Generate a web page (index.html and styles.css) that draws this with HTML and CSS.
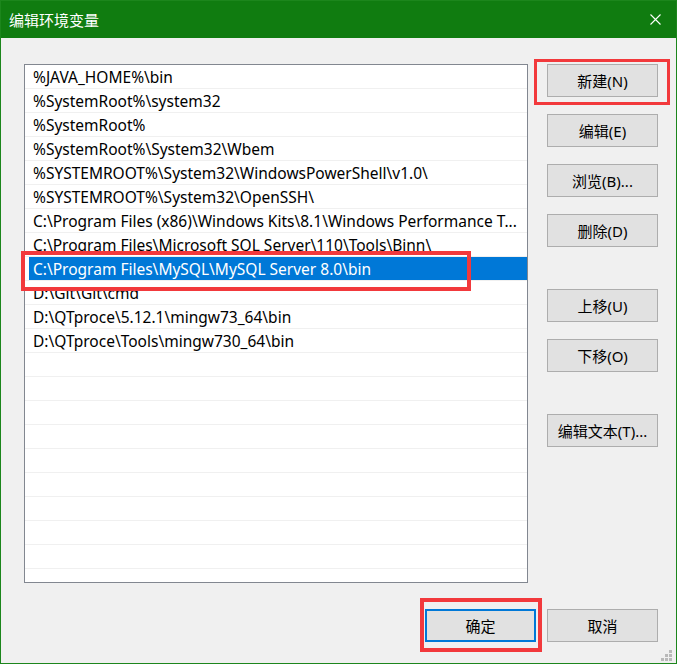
FILE: index.html
```html
<!DOCTYPE html>
<html lang="zh-CN">
<head>
<meta charset="utf-8">
<title>编辑环境变量</title>
<link rel="stylesheet" href="styles.css">
</head>
<body>
<div class="window">
  <div class="titlebar">
    <span class="title">编辑环境变量</span>
    <svg class="close" width="11" height="11" viewBox="0 0 11 11"><path d="M0.5 0.5 L10.5 10.5 M10.5 0.5 L0.5 10.5" stroke="#fff" stroke-width="1.1" fill="none"/></svg>
  </div>
  <div class="content">
    <div class="main">
      <div class="list">
        <div class="row"><span class="cell">%JAVA_HOME%\bin</span></div>
        <div class="row"><span class="cell">%SystemRoot%\system32</span></div>
        <div class="row"><span class="cell">%SystemRoot%</span></div>
        <div class="row"><span class="cell">%SystemRoot%\System32\Wbem</span></div>
        <div class="row"><span class="cell">%SYSTEMROOT%\System32\WindowsPowerShell\v1.0\</span></div>
        <div class="row"><span class="cell">%SYSTEMROOT%\System32\OpenSSH\</span></div>
        <div class="row"><span class="cell">C:\Program Files (x86)\Windows Kits\8.1\Windows Performance T...</span></div>
        <div class="row"><span class="cell">C:\Program Files\Microsoft SQL Server\110\Tools\Binn\</span></div>
        <div class="row selected"><span class="cell">C:\Program Files\MySQL\MySQL Server 8.0\bin</span></div>
        <div class="row"><span class="cell">D:\Git\Git\cmd</span></div>
        <div class="row"><span class="cell">D:\QTproce\5.12.1\mingw73_64\bin</span></div>
        <div class="row"><span class="cell">D:\QTproce\Tools\mingw730_64\bin</span></div>
        <div class="row"><span class="cell"></span></div>
        <div class="row"><span class="cell"></span></div>
        <div class="row"><span class="cell"></span></div>
        <div class="row"><span class="cell"></span></div>
        <div class="row"><span class="cell"></span></div>
        <div class="row"><span class="cell"></span></div>
        <div class="row"><span class="cell"></span></div>
        <div class="row"><span class="cell"></span></div>
        <div class="row"><span class="cell"></span></div>
        <div class="row"><span class="cell"></span></div>
      </div>
      <div class="side">
        <div class="group">
          <button class="btn">新建(N)</button>
          <button class="btn">编辑(E)</button>
          <button class="btn">浏览(B)...</button>
          <button class="btn">删除(D)</button>
        </div>
        <div class="group">
          <button class="btn">上移(U)</button>
          <button class="btn">下移(O)</button>
        </div>
        <div class="group">
          <button class="btn">编辑文本(T)...</button>
        </div>
      </div>
    </div>
    <div class="footer">
      <button class="btn default">确定</button>
      <button class="btn">取消</button>
    </div>
  </div>
  <svg class="grip" width="12" height="12" viewBox="0 0 12 12">
    <rect x="8" y="0" width="3" height="3" fill="#b9b9b9"/>
    <rect x="4" y="4" width="3" height="3" fill="#b9b9b9"/>
    <rect x="8" y="4" width="3" height="3" fill="#b9b9b9"/>
    <rect x="0" y="8" width="3" height="3" fill="#b9b9b9"/>
    <rect x="4" y="8" width="3" height="3" fill="#b9b9b9"/>
    <rect x="8" y="8" width="3" height="3" fill="#b9b9b9"/>
  </svg>
  <div class="mark mark-new"></div>
  <div class="mark mark-row"></div>
  <div class="mark mark-ok"></div>
</div>
</body>
</html>
```

FILE: styles.css
```css
html, body {
  margin: 0;
  padding: 0;
  background: #f0f0f0;
}

body {
  font-family: "Noto Sans", "Noto Sans CJK SC", sans-serif;
  font-size: 15px;
  color: #000;
}

.window {
  position: relative;
  width: 677px;
  height: 664px;
  box-sizing: border-box;
  border: 1px solid #1c861c;
  background: #f0f0f0;
  overflow: hidden;
}

.titlebar {
  height: 37px;
  background: #107c10;
  display: flex;
  align-items: center;
  justify-content: space-between;
  padding: 0 15px 0 8px;
}

.title {
  color: #fff;
  font-family: "Noto Sans CJK SC", sans-serif;
  font-size: 15px;
  line-height: 20px;
}

.close {
  display: block;
}

.content {
  padding: 26px 18px 0 23px;
}

.main {
  display: flex;
  gap: 19px;
}

.list {
  width: 504px;
  height: 519px;
  box-sizing: border-box;
  border: 1px solid #828790;
  background: #fff;
  overflow: hidden;
  font-size: 15.5px;
}

.row {
  height: 23px;
  border-bottom: 1px solid #f0f0f0;
  display: flex;
}

.cell {
  flex: 1;
  margin-left: 4px;
  padding-left: 4px;
  line-height: 24px;
  white-space: nowrap;
  overflow: hidden;
}

.row.selected .cell {
  background: #0078d7;
  color: #fff;
}

.side {
  display: flex;
  flex-direction: column;
  gap: 42px;
}

.group {
  display: flex;
  flex-direction: column;
  gap: 17px;
}

.btn {
  width: 111px;
  height: 33px;
  box-sizing: border-box;
  border: 1px solid #adadad;
  background: #e1e1e1;
  font-family: "Noto Sans", "Noto Sans CJK SC", sans-serif;
  font-size: 15px;
  color: #000;
  padding: 0;
  margin: 0;
}

.btn.default {
  border: 2px solid #0078d7;
}

.footer {
  display: flex;
  justify-content: flex-end;
  gap: 11px;
  margin-top: 26px;
}

.grip {
  position: absolute;
  right: 3px;
  bottom: 1px;
}

.mark {
  position: absolute;
  border: 3px solid #f2393c;
  box-sizing: border-box;
}

.mark-new {
  left: 533px;
  top: 58px;
  width: 136px;
  height: 46px;
}

.mark-row {
  left: 20px;
  top: 250px;
  width: 450px;
  height: 40px;
  border-width: 4px;
}

.mark-ok {
  left: 419px;
  top: 597px;
  width: 122px;
  height: 54px;
  border-width: 4px;
}
```
